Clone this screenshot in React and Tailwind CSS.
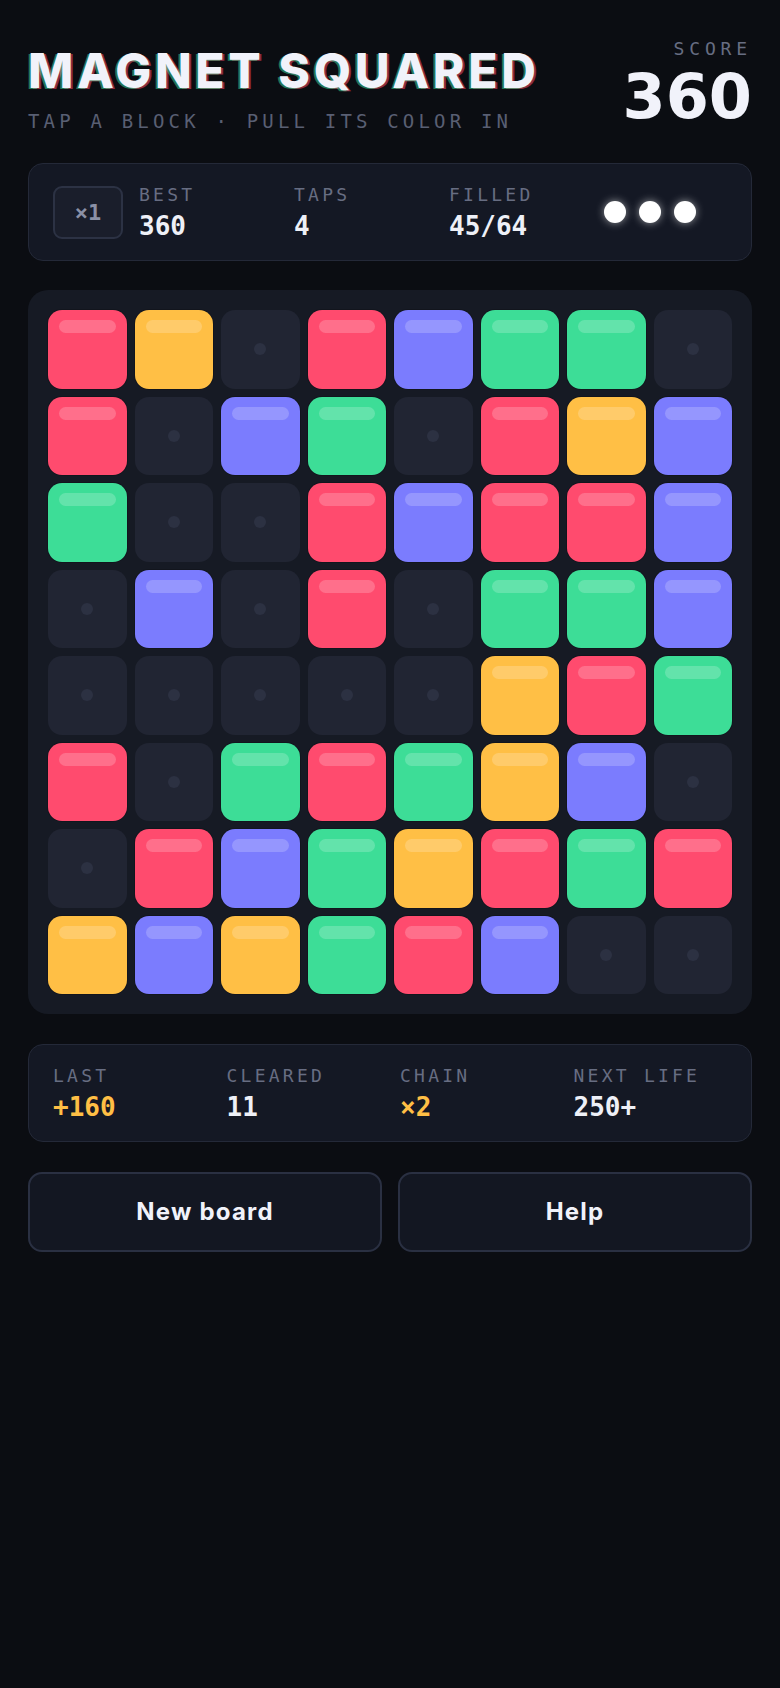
const mono = "font-['DejaVu_Sans_Mono',monospace]";
const sans = "font-['Inter','DejaVu_Sans',sans-serif]";

const board = [
  "RYERBGGE",
  "REBGERYB",
  "GEERBRRB",
  "EBEREGGB",
  "EEEEEYRG",
  "REGRGYBE",
  "ERBGYRGR",
  "YBYGRBEE",
];

const tileColor = {
  R: "bg-[#ff4b6e]",
  Y: "bg-[#ffbf45]",
  B: "bg-[#7b7cfe]",
  G: "bg-[#3ddd97]",
};

const Tile = ({ kind }) => {
  if (kind === "E") {
    return (
      <div className="flex aspect-square items-center justify-center rounded-[14px] bg-[#212533]">
        <div className="h-3 w-3 rounded-full bg-[#2c3142]" />
      </div>
    );
  }
  return (
    <div
      className={`relative aspect-square rounded-[14px] shadow-[0_0_0_1px_rgba(0,0,0,0.18)] ${tileColor[kind]}`}
    >
      <div className="absolute left-[11px] right-[11px] top-[10px] h-[13px] rounded-full bg-white/20" />
    </div>
  );
};

const Stat = ({ label, value, tone = "text-[#eef0f7]", className = "" }) => (
  <div className={className}>
    <p className={`${mono} text-[18px] leading-[22px] tracking-[0.18em] text-[#676d82]`}>{label}</p>
    <p className={`${mono} mt-[5px] text-[26px] font-bold leading-[30px] ${tone}`}>{value}</p>
  </div>
);

export default function App() {
  return (
    <div className="min-h-screen bg-[#0b0d12] px-7 pt-[38px] pb-10 text-[#eef0f7]">
      <header className="flex items-start justify-between">
        <div className="mt-[9px]">
          <h1
            className={`${sans} text-[48px] font-extrabold leading-none tracking-[0.075em] text-[#f1f2fa] [text-shadow:-2px_1px_0_rgba(61,221,151,0.5),2px_1px_0_rgba(255,75,110,0.55)]`}
          >
            MAGNET SQUARED
          </h1>
          <p className={`${mono} mt-[15px] text-[19px] leading-[22px] tracking-[0.22em] text-[#595f73]`}>
            TAP A BLOCK · PULL ITS COLOR IN
          </p>
        </div>
        <div className="flex flex-col items-end">
          <p className={`${mono} text-[18px] leading-[22px] tracking-[0.27em] text-[#676d82]`}>SCORE</p>
          <p className="mt-[6px] font-['DejaVu_Sans',sans-serif] text-[62px] font-bold leading-none text-[#f1f2fa]">
            360
          </p>
        </div>
      </header>

      <section className="mt-[31px] flex h-[98px] items-center rounded-[15px] border border-[#242938] bg-[#141824] px-6">
        <div
          className={`${mono} flex h-[53px] w-[70px] items-center justify-center rounded-[9px] border-2 border-[#2c3244] bg-[#1a1e2b] text-[22px] font-bold text-[#8a90a6]`}
        >
          ×1
        </div>
        <Stat label="BEST" value="360" className="ml-4 w-[155px]" />
        <Stat label="TAPS" value="4" className="w-[155px]" />
        <Stat label="FILLED" value="45/64" className="w-[155px]" />
        <div className="flex items-center gap-[13px]">
          <span className="h-[22px] w-[22px] rounded-full bg-white shadow-[0_0_8px_rgba(255,255,255,0.55)]" />
          <span className="h-[22px] w-[22px] rounded-full bg-white shadow-[0_0_8px_rgba(255,255,255,0.55)]" />
          <span className="h-[22px] w-[22px] rounded-full bg-white shadow-[0_0_8px_rgba(255,255,255,0.55)]" />
        </div>
      </section>

      <section className="mt-[29px] grid grid-cols-8 gap-2 rounded-[20px] bg-[#161a24] p-5">
        {board.map((row, r) =>
          row.split("").map((kind, c) => <Tile key={`${r}-${c}`} kind={kind} />)
        )}
      </section>

      <section className="mt-[30px] grid h-[98px] grid-cols-4 items-center gap-5 rounded-[15px] border border-[#242938] bg-[#141824] px-6">
        <Stat label="LAST" value="+160" tone="text-[#ffbf45]" />
        <Stat label="CLEARED" value="11" />
        <Stat label="CHAIN" value="×2" tone="text-[#ffbf45]" />
        <Stat label="NEXT LIFE" value="250+" />
      </section>

      <div className="mt-[30px] grid grid-cols-2 gap-4">
        <button
          className={`${sans} h-[80px] rounded-[14px] border-2 border-[#2a3042] bg-[#131722] text-[24px] font-bold tracking-[0.05em] text-[#f1f2fa]`}
        >
          New board
        </button>
        <button
          className={`${sans} h-[80px] rounded-[14px] border-2 border-[#2a3042] bg-[#131722] text-[24px] font-bold tracking-[0.05em] text-[#f1f2fa]`}
        >
          Help
        </button>
      </div>
    </div>
  );
}
